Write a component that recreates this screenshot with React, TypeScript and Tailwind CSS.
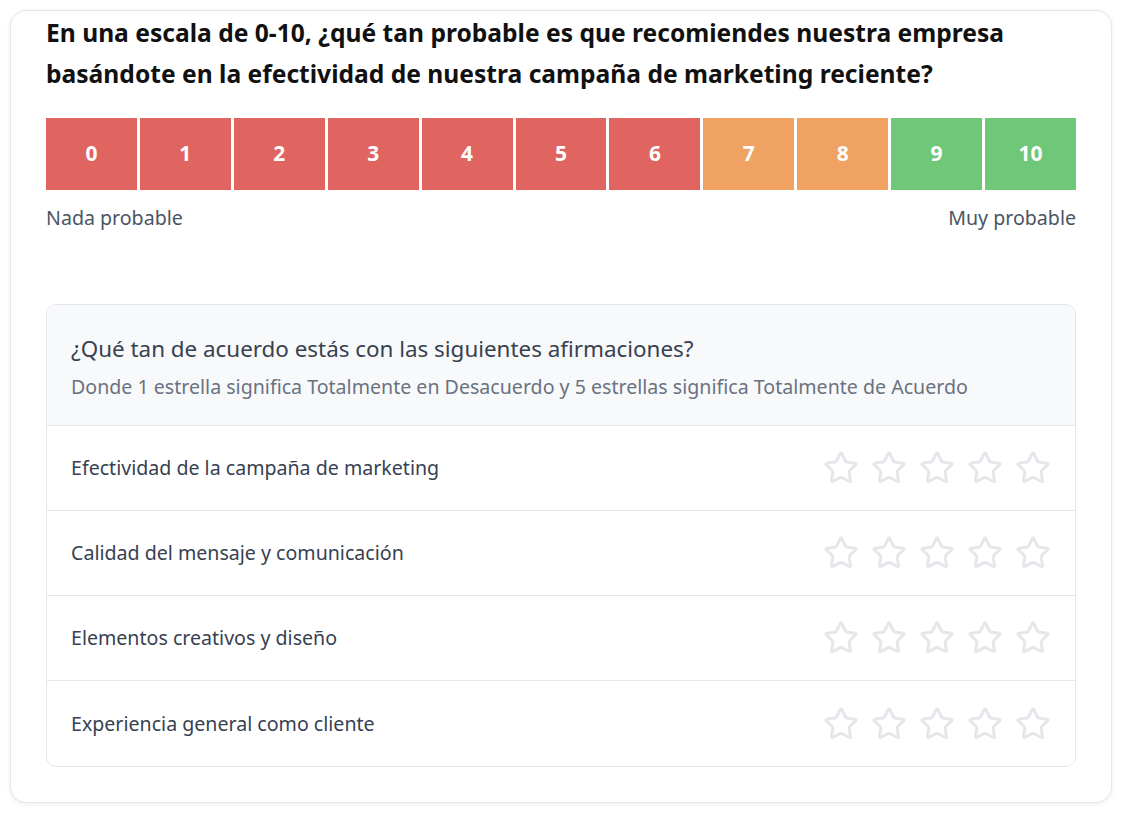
import React from "react";

const nums = [0, 1, 2, 3, 4, 5, 6, 7, 8, 9, 10];

function colorFor(n: number) {
  if (n <= 6) return "bg-[#e0645f]";
  if (n <= 8) return "bg-[#efa262]";
  return "bg-[#6ec878]";
}

function StarIcon() {
  return (
    <svg
      width="36"
      height="36"
      viewBox="0 0 24 24"
      fill="none"
      stroke="#e5e7eb"
      strokeWidth="2"
      strokeLinecap="round"
      strokeLinejoin="round"
    >
      <path d="M11.525 2.295a.53.53 0 0 1 .95 0l2.31 4.679a2.123 2.123 0 0 0 1.595 1.16l5.166.756a.53.53 0 0 1 .294.904l-3.736 3.638a2.123 2.123 0 0 0-.611 1.878l.882 5.14a.53.53 0 0 1-.771.56l-4.618-2.428a2.122 2.122 0 0 0-1.973 0L6.396 21.01a.53.53 0 0 1-.77-.56l.881-5.139a2.122 2.122 0 0 0-.611-1.879L2.16 9.795a.53.53 0 0 1 .294-.906l5.165-.755a2.122 2.122 0 0 0 1.597-1.16z" />
    </svg>
  );
}

const items = [
  "Efectividad de la campaña de marketing",
  "Calidad del mensaje y comunicación",
  "Elementos creativos y diseño",
  "Experiencia general como cliente",
];

export default function App() {
  return (
    <div
      className="bg-white pt-[10px] pb-[10px] pl-[10px] pr-[14px]"
      style={{ fontFamily: '"Noto Sans", "Open Sans", sans-serif' }}
    >
      <div className="rounded-2xl border border-[#e5e7eb] bg-white px-[35px] pt-[1px] pb-[35px] shadow-[0_1px_4px_rgba(0,0,0,0.08)]">
        <h1 className="text-[24.6px] font-bold leading-[41px] text-[#111111]">
          En una escala de 0-10, ¿qué tan probable es que recomiendes nuestra empresa basándote en la efectividad de nuestra campaña de marketing reciente?
        </h1>
        <div className="mt-6 flex gap-[3px]">
          {nums.map((n) => (
            <div
              key={n}
              className={`flex h-[72px] flex-1 items-center justify-center text-[21px] font-bold text-white ${colorFor(n)}`}
            >
              {n}
            </div>
          ))}
        </div>
        <div className="mt-[14px] flex justify-between text-[19.6px] leading-[28px] text-[#4b5563]">
          <span>Nada probable</span>
          <span>Muy probable</span>
        </div>
        <div className="mt-[72px] overflow-hidden rounded-[10px] border border-[#e5e7eb]">
          <div className="border-b border-[#e5e7eb] bg-[#f8f9fb] px-6 pt-[26px] pb-[24px]">
            <div className="text-[22.4px] leading-[36px] text-[#374151]">
              ¿Qué tan de acuerdo estás con las siguientes afirmaciones?
            </div>
            <div className="mt-[6px] text-[19.6px] leading-[28px] text-[#6b7280]">
              Donde 1 estrella significa Totalmente en Desacuerdo y 5 estrellas significa Totalmente de Acuerdo
            </div>
          </div>
          {items.map((t, i) => (
            <div
              key={t}
              className={`flex h-[85px] items-center justify-between px-6 ${i < items.length - 1 ? "border-b border-[#e5e7eb]" : ""}`}
            >
              <span className="text-[19.6px] text-[#374151]">{t}</span>
              <div className="flex gap-3">
                {[0, 1, 2, 3, 4].map((s) => (
                  <StarIcon key={s} />
                ))}
              </div>
            </div>
          ))}
        </div>
      </div>
    </div>
  );
}
